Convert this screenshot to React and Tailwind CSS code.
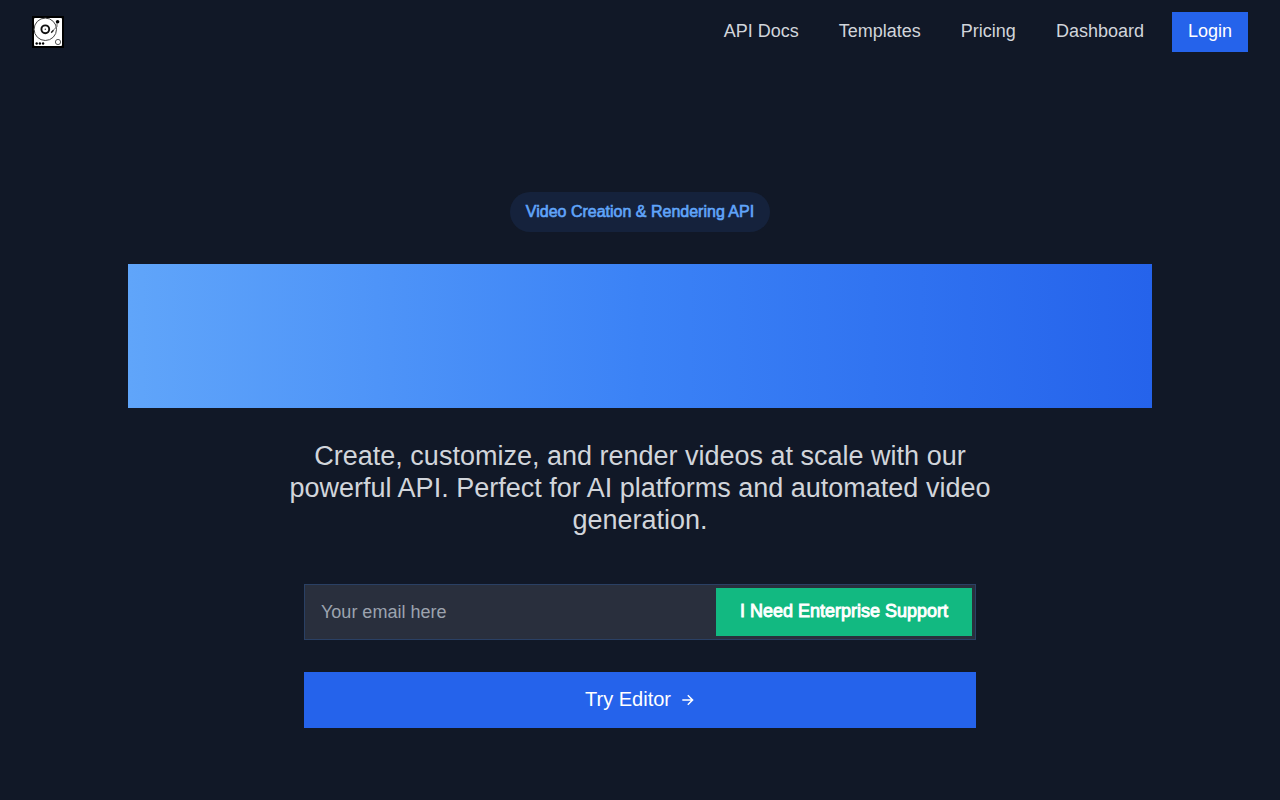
import React, { useState } from 'react';

const navLinks = ['API Docs', 'Templates', 'Pricing', 'Dashboard'];

const Logo = () => (
  <svg width="32" height="32" viewBox="0 0 32 32" fill="none">
    <rect width="32" height="32" fill="#000" />
    <rect x="2" y="2" width="28" height="28" rx="1" fill="#fff" />
    <circle cx="13.3" cy="13.3" r="11.2" stroke="#444" strokeWidth="1" />
    <circle cx="13.3" cy="13.3" r="3.9" stroke="#111" strokeWidth="1.9" />
    <circle cx="13.3" cy="13.3" r="0.7" fill="#333" />
    <circle cx="25.6" cy="5.8" r="1.8" fill="#000" />
    <path d="M25 7v3.5l-5.5 5.5" stroke="#555" strokeWidth="0.9" />
    <path d="M21.5 14.3l-2.3 2.4" stroke="#222" strokeWidth="1.3" />
    <circle cx="4.7" cy="27.5" r="1.2" fill="#000" />
    <circle cx="7.9" cy="27.5" r="1.2" fill="#000" />
    <circle cx="11.1" cy="27.5" r="1.2" fill="#000" />
    <circle cx="26" cy="26" r="2.6" stroke="#444" strokeWidth="0.9" />
  </svg>
);

const Navbar = () => (
  <header className="flex h-16 items-center justify-between px-8">
    <a href="#" aria-label="Home">
      <Logo />
    </a>
    <nav className="flex items-center gap-7 text-[18px] leading-6">
      <div className="flex items-center gap-10 pb-0.5 text-[#d1d5db]">
        {navLinks.map((label) => (
          <a key={label} href="#" className="hover:text-white">
            {label}
          </a>
        ))}
      </div>
      <button type="button" className="h-10 bg-[#2563eb] px-4 pb-0.5 text-white hover:bg-[#1d4ed8]">
        Login
      </button>
    </nav>
  </header>
);

const SupportForm = () => {
  const [email, setEmail] = useState('');

  const handleSubmit = (e) => {
    e.preventDefault();
  };

  return (
    <form
      onSubmit={handleSubmit}
      className="flex w-full items-center border border-[#2a4064] bg-[#292f3d] p-[3px]"
    >
      <input
        type="email"
        aria-label="Your email here"
        placeholder="Your email here"
        className="h-12 min-w-0 flex-1 bg-transparent px-[13px] text-[18px] text-white placeholder:text-[#9ca3af] focus:outline-none"
        value={email}
        onChange={(e) => setEmail(e.target.value)}
      />
      <button
        type="submit"
        className="h-12 bg-[#12b981] px-6 pb-0.5 text-[18px] text-white [-webkit-text-stroke:0.05em] hover:bg-[#059669]"
      >
        I Need Enterprise Support
      </button>
    </form>
  );
};

const App = () => {
  return (
    <div className="min-h-screen bg-[#111827] font-['Liberation_Sans',Arial,sans-serif]">
      <Navbar />
      <main className="mx-auto flex max-w-5xl flex-col items-center pt-32 pb-[72px]">
        <span className="rounded-full bg-[#3b82f6]/10 px-4 py-2 text-[16px] leading-6 text-[#60a5fa] [-webkit-text-stroke:0.04em]">
          Video Creation &amp; Rendering API
        </span>
        <div
          aria-hidden="true"
          className="mt-8 h-36 w-full bg-[linear-gradient(to_right,#60a5fa,#3b82f6,#2563eb)]"
        />
        <p className="mt-8 max-w-3xl px-6 text-center text-[27px] leading-8 text-[#d1d5db]">
          Create, customize, and render videos at scale with our powerful API. Perfect for AI
          platforms and automated video generation.
        </p>
        <div className="mt-12 flex w-full max-w-2xl flex-col gap-8">
          <SupportForm />
          <button
            type="button"
            className="flex h-14 items-center justify-center gap-2 bg-[#2563eb] text-[20px] text-white hover:bg-[#1d4ed8]"
          >
            <span className="pb-0.5">Try Editor</span>
            <svg width="16" height="16" viewBox="0 0 16 16" fill="none" stroke="currentColor" strokeWidth="1.5">
              <path d="M3.3 8h10M8.8 3.2L13.6 8l-4.8 4.8" />
            </svg>
          </button>
        </div>
      </main>
    </div>
  );
};

export default App;
